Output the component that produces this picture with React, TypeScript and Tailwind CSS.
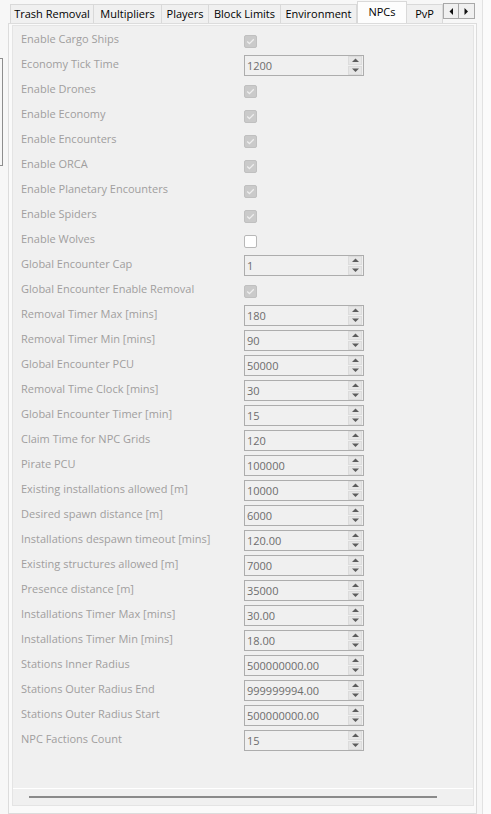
import type { ReactNode } from "react";

type Row =
  | { label: string; kind: "check"; checked: boolean }
  | { label: string; kind: "num"; value: string };

const ROWS: Row[] = [
  { label: "Enable Cargo Ships", kind: "check", checked: true },
  { label: "Economy Tick Time", kind: "num", value: "1200" },
  { label: "Enable Drones", kind: "check", checked: true },
  { label: "Enable Economy", kind: "check", checked: true },
  { label: "Enable Encounters", kind: "check", checked: true },
  { label: "Enable ORCA", kind: "check", checked: true },
  { label: "Enable Planetary Encounters", kind: "check", checked: true },
  { label: "Enable Spiders", kind: "check", checked: true },
  { label: "Enable Wolves", kind: "check", checked: false },
  { label: "Global Encounter Cap", kind: "num", value: "1" },
  { label: "Global Encounter Enable Removal", kind: "check", checked: true },
  { label: "Removal Timer Max [mins]", kind: "num", value: "180" },
  { label: "Removal Timer Min [mins]", kind: "num", value: "90" },
  { label: "Global Encounter PCU", kind: "num", value: "50000" },
  { label: "Removal Time Clock [mins]", kind: "num", value: "30" },
  { label: "Global Encounter Timer [min]", kind: "num", value: "15" },
  { label: "Claim Time for NPC Grids", kind: "num", value: "120" },
  { label: "Pirate PCU", kind: "num", value: "100000" },
  { label: "Existing installations allowed [m]", kind: "num", value: "10000" },
  { label: "Desired spawn distance [m]", kind: "num", value: "6000" },
  { label: "Installations despawn timeout [mins]", kind: "num", value: "120.00" },
  { label: "Existing structures allowed [m]", kind: "num", value: "7000" },
  { label: "Presence distance [m]", kind: "num", value: "35000" },
  { label: "Installations Timer Max [mins]", kind: "num", value: "30.00" },
  { label: "Installations Timer Min [mins]", kind: "num", value: "18.00" },
  { label: "Stations Inner Radius", kind: "num", value: "500000000.00" },
  { label: "Stations Outer Radius End", kind: "num", value: "999999994.00" },
  { label: "Stations Outer Radius Start", kind: "num", value: "500000000.00" },
  { label: "NPC Factions Count", kind: "num", value: "15" },
];

const TABS = [
  { name: "Trash Removal", w: "w-[84px]" },
  { name: "Multipliers", w: "w-[68px]" },
  { name: "Players", w: "w-[47px]" },
  { name: "Block Limits", w: "w-[72px]" },
  { name: "Environment", w: "w-[76px]" },
  { name: "NPCs", w: "w-[50px]", active: true },
  { name: "PvP", w: "w-[36px]" },
];

function Arrow({ dir }: { dir: "up" | "down" | "left" | "right" }) {
  const pts = {
    up: "0,4 3.5,0.5 7,4",
    down: "0,0.5 3.5,4 7,0.5",
    left: "4,0 4,7 0.5,3.5",
    right: "0.5,0 0.5,7 4,3.5",
  }[dir];
  const vertical = dir === "up" || dir === "down";
  return (
    <svg
      width={vertical ? 7 : 5}
      height={vertical ? 5 : 7}
      viewBox={vertical ? "0 0 7 5" : "0 0 5 7"}
    >
      <polygon points={pts} fill={vertical ? "#5c5c5c" : "#111"} />
    </svg>
  );
}

function CheckBox({ checked }: { checked: boolean }) {
  if (!checked)
    return (
      <div className="mt-[4px] h-[13px] w-[13px] rounded-[2px] border border-[#b8b8b8] bg-white" />
    );
  return (
    <div className="mt-[4px] flex h-[13px] w-[13px] items-center justify-center rounded-[2px] border border-[#c0c0c0] bg-[#cacaca]">
      <svg width="9" height="7" viewBox="0 0 9 7">
        <path d="M1.2 3.6 L3.4 5.6 L7.8 1.2" stroke="#eeeeee" strokeWidth="1.3" fill="none" />
      </svg>
    </div>
  );
}

function SpinBox({ value }: { value: string }) {
  return (
    <div className="mt-[2px] flex h-[21px] w-[120px] items-center border border-[#adadad] bg-[#f0f0f0] pr-px">
      <span className="flex-1 pl-[2px] text-[11px] leading-none text-[#6d6d6d]">{value}</span>
      <div className="flex flex-col gap-px">
        <div className="flex h-[9px] w-[14px] items-center justify-center border border-[#dcdcdc] bg-[#e6e6e6]">
          <Arrow dir="up" />
        </div>
        <div className="flex h-[9px] w-[14px] items-center justify-center border border-[#dcdcdc] bg-[#e6e6e6]">
          <Arrow dir="down" />
        </div>
      </div>
    </div>
  );
}

function Field({ row }: { row: Row }): ReactNode {
  return (
    <div className="flex h-[25px] items-center">
      <div className="w-[223px] shrink-0 whitespace-nowrap text-[11px] text-[#a09e9e]">{row.label}</div>
      {row.kind === "check" ? <CheckBox checked={row.checked} /> : <SpinBox value={row.value} />}
    </div>
  );
}

export default function App() {
  return (
    <div
      className="flex h-[814px] w-[491px] overflow-hidden bg-[#f7f7f7]"
      style={{ fontFamily: '"Open Sans", "Noto Sans", sans-serif' }}
    >
      {/* edge of the neighbouring list box */}
      <div className="w-[8px] shrink-0 pt-[58px]">
        <div className="h-[108px] w-[3px] border-y border-r border-[#8e8e8e]" />
      </div>

      <div className="flex w-[469px] shrink-0 flex-col">
        {/* tab strip */}
        <div className="flex h-[23px] items-end pl-[2px]">
          {TABS.map((t) =>
            t.active ? (
              <div
                key={t.name}
                className={`${t.w} -mb-px flex h-[23px] shrink-0 justify-center whitespace-nowrap border border-b-0 border-[#d9d9d9] bg-[#fdfdfd] pt-[2px] text-[11px] text-black`}
              >
                {t.name}
              </div>
            ) : (
              <div
                key={t.name}
                className={`${t.w} flex h-[19px] shrink-0 items-center justify-center whitespace-nowrap border border-b-0 border-l-0 border-[#d9d9d9] bg-[#f0f0f0] text-[11px] text-black first:border-l`}
              >
                {t.name}
              </div>
            ),
          )}
          <div className="mb-[4px] flex h-[16px] shrink-0">
            <div className="flex w-[16px] items-center justify-center border border-[#a8a8a8] bg-[#f0f0f0]">
              <Arrow dir="left" />
            </div>
            <div className="flex w-[16px] items-center justify-center border border-l-0 border-[#a8a8a8] bg-[#f0f0f0]">
              <Arrow dir="right" />
            </div>
          </div>
        </div>

        {/* tab page */}
        <div className="flex flex-1 flex-col border border-[#dcdcdc] bg-[#fafafa] pb-[7px] pl-[3px] pr-[2px] pt-px">
          <div className="flex flex-1 flex-col border border-[#e4e4e4] bg-[#f0f0f0]">
            <div className="flex-1 pl-[8px] pt-px">
              {ROWS.map((r) => (
                <Field key={r.label} row={r} />
              ))}
            </div>
            <div className="h-px bg-white" />
            <div className="flex h-[16px] items-center pl-[16px]">
              <div className="h-[2px] w-[408px] bg-[#8a8a8a]" />
            </div>
          </div>
        </div>
      </div>

      <div className="w-[5px] shrink-0" />
      <div className="flex-1 border-l border-[#e2e2e2] bg-[#fbfbfb]" />
    </div>
  );
}
